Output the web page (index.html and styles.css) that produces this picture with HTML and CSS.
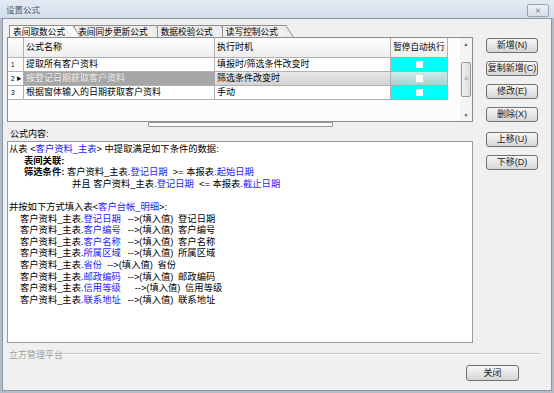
FILE: index.html
```html
<html>
<head>
    <meta charset="utf-8">
    <link rel="stylesheet" href="styles.css">
</head>
<body>
<div class="window">
    <div class="titlebar">
        <span class="title">设置公式</span>
        <span class="closex">✕</span>
    </div>
    <div class="client">
        <div class="body">
            <div class="left">
                <div class="tabs">
                    <div class="tab active">表间取数公式</div>
                    <div class="tab">表间同步更新公式</div>
                    <div class="tab">数据校验公式</div>
                    <div class="tab">读写控制公式</div>
                </div>
                <div class="grid">
                    <div class="cells">
                        <div class="row head"><div></div><div>公式名称</div><div>执行时机</div><div class="c">暂停自动执行</div></div>
                        <div class="row"><div class="ind">1</div><div>提取所有客户资料</div><div>填报时/筛选条件改变时</div><div class="chk"><span class="box"></span></div></div>
                        <div class="row sel"><div class="ind">2 <span class="tri">▶</span></div><div>按登记日期获取客户资料</div><div>筛选条件改变时</div><div class="chk"><span class="box"></span></div></div>
                        <div class="row"><div class="ind">3</div><div>根据窗体输入的日期获取客户资料</div><div>手动</div><div class="chk"><span class="box"></span></div></div>
                    </div>
                    <div class="vscroll">
                        <span class="arr">▲</span>
                        <div class="track"><div class="thumb">≡</div></div>
                        <span class="arr">▼</span>
                    </div>
                </div>
                <div class="splitter"></div>
                <div class="label">公式内容:</div>
                <div class="memo">
                    <div class="ln">从表 &lt;<span class="f">客户资料_主表</span>&gt; 中提取满足如下条件的数据:</div>
                    <div class="ln i1"><b>表间关联:</b></div>
                    <div class="ln i1"><b>筛选条件:</b> 客户资料_主表.<span class="f">登记日期</span>  &gt;= 本报表.<span class="f">起始日期</span></div>
                    <div class="ln i3">并且 客户资料_主表.<span class="f">登记日期</span>  &lt;= 本报表.<span class="f">截止日期</span></div>
                    <div class="ln">&nbsp;</div>
                    <div class="ln">并按如下方式填入表&lt;<span class="f">客户台帐_明细</span>&gt;:</div>
                    <div class="ln i2">客户资料_主表.<span class="f g2">登记日期</span>--&gt;(填入值) <span class="t">登记日期</span></div>
                    <div class="ln i2">客户资料_主表.<span class="f g2">客户编号</span>--&gt;(填入值) <span class="t">客户编号</span></div>
                    <div class="ln i2">客户资料_主表.<span class="f g2">客户名称</span>--&gt;(填入值) <span class="t">客户名称</span></div>
                    <div class="ln i2">客户资料_主表.<span class="f g2">所属区域</span>--&gt;(填入值) <span class="t">所属区域</span></div>
                    <div class="ln i2">客户资料_主表.<span class="f g1">省份</span>--&gt;(填入值) <span class="t">省份</span></div>
                    <div class="ln i2">客户资料_主表.<span class="f g2">邮政编码</span>--&gt;(填入值) <span class="t">邮政编码</span></div>
                    <div class="ln i2">客户资料_主表.<span class="f g3">信用等级</span>--&gt;(填入值) <span class="t">信用等级</span></div>
                    <div class="ln i2">客户资料_主表.<span class="f g2">联系地址</span>--&gt;(填入值) <span class="t">联系地址</span></div>
                </div>
            </div>
            <div class="buttons">
                <div class="btn">新增(N)</div>
                <div class="btn">复制新增(C)</div>
                <div class="btn">修改(E)</div>
                <div class="btn">删除(X)</div>
                <div class="btn gap">上移(U)</div>
                <div class="btn">下移(D)</div>
            </div>
        </div>
        <div class="group"><span>立方管理平台</span></div>
        <div class="foot"><div class="btn close">关闭</div></div>
    </div>
</div>
</body>
</html>
```

FILE: styles.css
```css
body {margin: 0; font-family: "Liberation Sans", "Noto Sans CJK SC", sans-serif; font-size: 9px; color: #000;}

.window
{
    width: 554px;
    height: 393px;
    display: flex;
    flex-direction: column;
    background: #b3bdc8;
    box-sizing: border-box;
}

.titlebar
{
    height: 18px;
    flex: none;
    display: flex;
    align-items: center;
    justify-content: space-between;
    padding: 0 5px 0 6px;
    background: linear-gradient(#e3eaf3, #d2deeb);
}
.title {color: #4a5868; font-size: 8.5px;}
.closex
{
    width: 20px;
    height: 11px;
    margin-top: 2px;
    border: 1px solid #98a4b2;
    border-radius: 2px;
    background: linear-gradient(#edf1f6, #d6dee8);
    color: #6c7888;
    font-size: 7px;
    line-height: 11px;
    text-align: center;
}

.client
{
    flex: 1;
    margin: 0 2px 2px 2px;
    border: 1px solid #8a96a3;
    background: #f0f0f0;
    display: flex;
    flex-direction: column;
}

.body
{
    display: grid;
    grid-template-columns: 466px 52px;
    column-gap: 13px;
    align-items: start;
    padding: 6px 0 0 4px;
}

/* tabs */
.tabs {display: flex; height: 12px; padding-left: 2px;}
.tab
{
    position: relative;
    height: 12px;
    line-height: 12px;
    padding: 0 1px 0 3px;
    margin-right: 8px;
    border-left: 1px solid #8e8e8e;
    border-top: 1px solid #8e8e8e;
    box-sizing: border-box;
    background: #ececec;
    white-space: nowrap;
    font-size: 8.7px;
}
.tab::after
{
    content: "";
    position: absolute;
    top: -1px;
    right: -7px;
    width: 7px;
    bottom: 0;
    border-top: 1px solid #8e8e8e;
    border-right: 1px solid #8e8e8e;
    background: inherit;
    transform: skewX(33deg);
    transform-origin: top left;
}
.tab.active {background: #fbfbfb; z-index: 1;}

/* grid */
.grid
{
    height: 85px;
    display: flex;
    border: 1px solid #8c8c8c;
    background: #fcfcfc;
    box-sizing: border-box;
}
.cells {flex: 1;}
.row
{
    display: grid;
    grid-template-columns: 16px 191px 176px 57px;
    height: 14px;
    line-height: 13px;
}
.row > div
{
    border-right: 1px solid #b0b0b0;
    border-bottom: 1px solid #b0b0b0;
    padding-left: 2px;
    white-space: nowrap;
    overflow: hidden;
    background: #fff;
}
.row.head {height: 20px; line-height: 19px;}
.row.head > div {background: linear-gradient(#fdfdfd, #eeeeee);}
.row .c {text-align: center; padding-left: 0; font-size: 8.6px;}
.row .ind {font-size: 6.5px; padding-left: 3px;}
.tri {font-size: 5px; position: relative; top: -1px;}
.row .chk {background: #00ffff; display: flex; align-items: center; justify-content: center; padding-left: 0;}
.box {width: 7px; height: 7px; background: #fff;}
.row.sel > div:nth-child(2) {background: #a6a6a6; color: #ececec;}
.row.sel > div:nth-child(3) {background: linear-gradient(#e8e8e8, #d2d2d2);}
.row.sel .chk {background: linear-gradient(#d0eaea, #a8d0d0);}
.row.sel .box {box-shadow: 0 0 0 1px #d8d8d8;}

.vscroll
{
    width: 12px;
    display: flex;
    flex-direction: column;
    align-items: center;
    background: #f4f4f4;
}
.arr {font-size: 5px; line-height: 12px; height: 12px; color: #555;}
.track {flex: 1; width: 100%; display: flex; flex-direction: column; padding-top: 12px; box-sizing: border-box;}
.thumb
{
    height: 33px;
    margin: 0 1px;
    border: 1px solid #9a9a9a;
    border-radius: 2px;
    background: linear-gradient(90deg, #f2f2f2, #dcdcdc);
    color: #888;
    font-size: 7px;
    line-height: 31px;
    text-align: center;
}

.splitter
{
    width: 185px;
    height: 5px;
    margin: 0 0 0 141px;
    border: 1px solid #9a9a9a;
    border-radius: 1px;
    background: #f8f8f8;
    box-sizing: border-box;
}

.label {height: 13px; line-height: 13px; padding-left: 3px; margin-top: 1px;}

.memo
{
    height: 202px;
    border: 1px solid #9a9a9a;
    background: #fff;
    box-sizing: border-box;
    padding: 2px 0 0 1px;
    font-size: 9.3px;
}
.ln {height: 11.6px; line-height: 11.6px; white-space: pre;}
.ln b {font-weight: bold;}
.i1 {padding-left: 15px;}
.i2 {padding-left: 11px;}
.i3 {padding-left: 63px;}
.f {color: #1c1cff;}
.g1 {margin-right: 5px;}
.g2 {margin-right: 7px;}
.g3 {margin-right: 14px;}
.t {margin-left: 2px;}

/* buttons */
.buttons {display: flex; flex-direction: column; gap: 8px; margin-top: 13px;}
.btn
{
    height: 15px;
    line-height: 13px;
    border: 1px solid #707070;
    border-radius: 3px;
    background: linear-gradient(#f7f7f7, #e6e6e6 50%, #d6d6d6);
    box-sizing: border-box;
    text-align: center;
    color: #222;
    white-space: nowrap;
}
.btn.gap {margin-top: 2px;}

.group
{
    display: flex;
    align-items: center;
    height: 12px;
    margin: 5px 11px 0 6px;
    color: #a0a0a0;
}
.group::after
{
    content: "";
    flex: 1;
    height: 0;
    border-top: 1px solid #c4c4c4;
    border-bottom: 1px solid #fff;
}

.foot {display: flex; justify-content: flex-end; padding: 5px 32px 0 0;}
.btn.close {width: 53px; height: 16px; line-height: 14px;}
```
